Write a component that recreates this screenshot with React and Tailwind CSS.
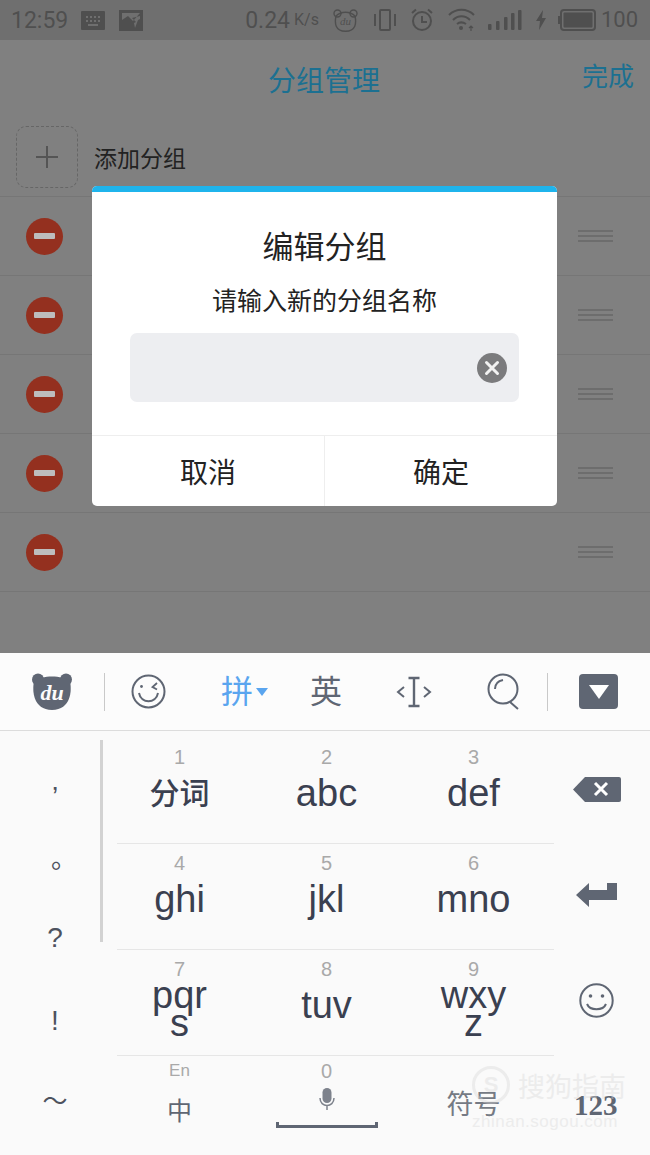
// App.jsx - group editing dialog over a list, with the pinyin keyboard open
import React from 'react';

const CJK = "font-['Noto_Sans_CJK_SC','Liberation_Sans',sans-serif]";

const keyRows = [
  [
    { num: '1', label: '分词', cjk: true },
    { num: '2', label: 'abc' },
    { num: '3', label: 'def' },
  ],
  [
    { num: '4', label: 'ghi' },
    { num: '5', label: 'jkl' },
    { num: '6', label: 'mno' },
  ],
  [
    { num: '7', label: 'pqr', second: 's' },
    { num: '8', label: 'tuv' },
    { num: '9', label: 'wxy', second: 'z' },
  ],
];

const StatusIcons = () => (
  <div className="flex items-center text-[#4f4f4f]">
    <span className="text-[23px] leading-none font-['Roboto',sans-serif]">0.24</span>
    <span className="ml-[4px] text-[16px] leading-none font-['Roboto',sans-serif]">K/s</span>
    <svg className="ml-[14px]" width="25" height="23" viewBox="0 0 25 23" fill="none" stroke="#4f4f4f" strokeWidth="1.4">
      <circle cx="4.5" cy="4.5" r="3.5" />
      <circle cx="20.5" cy="4.5" r="3.5" />
      <path d="M3 7C1.5 14 2 22 12.5 22.3C23 22 23.5 14 22 7C17 2 8 2 3 7Z" />
      <text x="12.5" y="15.5" fontSize="11" fontStyle="italic" fontFamily="Liberation Serif" textAnchor="middle" fill="#4f4f4f" stroke="none">du</text>
    </svg>
    <svg className="ml-[16px]" width="22" height="22" viewBox="0 0 22 22" fill="none" stroke="#4f4f4f">
      <rect x="6" y="1" width="10" height="20" rx="1" strokeWidth="2" />
      <path d="M1 5V17M21 5V17" strokeWidth="2" />
    </svg>
    <svg className="ml-[14px]" width="24" height="24" viewBox="0 0 24 24" fill="none" stroke="#4f4f4f" strokeWidth="2">
      <circle cx="12" cy="13" r="9" />
      <path d="M12 8V14H17M2 5L6 1.5M22 5L18 1.5" />
    </svg>
    <svg className="ml-[14px]" width="28" height="24" viewBox="0 0 28 24" fill="none" stroke="#4f4f4f" strokeWidth="2">
      <path d="M1 7C8 0 19 0 26 7M5 12C10 7 17 7 22 12M9 16C11.5 14 15 14 18 16" />
      <circle cx="13" cy="20" r="2" fill="#4f4f4f" stroke="none" />
      <path d="M23 23V18M21 20L23 18L25 20" strokeWidth="1.2" />
    </svg>
    <svg className="ml-[12px]" width="34" height="20" viewBox="0 0 34 20" fill="#4f4f4f">
      <rect x="0" y="14" width="3.5" height="6" rx="1" />
      <rect x="8" y="11" width="3.5" height="9" rx="1" />
      <rect x="16" y="7" width="3.5" height="13" rx="1" />
      <rect x="23" y="3" width="3.5" height="17" rx="1" />
      <rect x="30" y="0" width="3.5" height="20" rx="1" />
    </svg>
    <svg className="ml-[14px]" width="10" height="20" viewBox="0 0 10 20" fill="#4f4f4f">
      <path d="M7 0L0 11H4L3 20L10 8H6Z" />
    </svg>
    <svg className="ml-[12px]" width="38" height="22" viewBox="0 0 38 22" fill="none">
      <rect x="3" y="1" width="34" height="20" rx="3" stroke="#4f4f4f" strokeWidth="2" />
      <rect x="5.5" y="3.5" width="29" height="15" rx="1" fill="#4f4f4f" />
      <rect x="0" y="7" width="2" height="8" fill="#4f4f4f" />
    </svg>
    <span className="ml-[5px] text-[22px] leading-none font-['Roboto',sans-serif]">100</span>
  </div>
);

const GroupRow = () => (
  <div className="h-[79px] border-b border-[#767676] flex items-center justify-between pl-[26px] pr-[37px]">
    <div className="w-[37px] h-[37px] rounded-full bg-[#94301f] flex items-center justify-center">
      <div className="w-[21px] h-[6px] rounded-[1px] bg-[#bdbdbd]" />
    </div>
    <div className="w-[35px] flex flex-col gap-[3px]">
      <div className="h-[2px] bg-[#6d6d6d]" />
      <div className="h-[2px] bg-[#6d6d6d]" />
      <div className="h-[2px] bg-[#6d6d6d]" />
    </div>
  </div>
);

const Dialog = () => (
  <div className={`absolute left-[92px] top-[186px] w-[465px] h-[320px] bg-white rounded-[5px] overflow-hidden flex flex-col ${CJK}`}>
    <div className="h-[6px] bg-[#1fb4ec] shrink-0" />
    <div className="h-[244px] shrink-0 flex flex-col items-center border-b border-[#eeeeee]">
      <div className="mt-[30px] h-[44px] flex items-center text-[31px] leading-none text-[#222]">编辑分组</div>
      <div className="mt-[15px] h-[36px] flex items-center text-[25px] leading-none text-[#222]">请输入新的分组名称</div>
      <div className="mt-[16px] w-[389px] h-[69px] rounded-[7px] bg-[#edeef1] flex items-center justify-end pr-[12px]">
        <svg width="30" height="30" viewBox="0 0 30 30">
          <circle cx="15" cy="15" r="15" fill="#7b7b7d" />
          <path d="M9.5 9.5L20.5 20.5M20.5 9.5L9.5 20.5" stroke="#f2f2f2" strokeWidth="3" strokeLinecap="round" />
        </svg>
      </div>
    </div>
    <div className="flex-1 flex text-[28px] text-[#222]">
      <div className="w-[233px] border-r border-[#eeeeee] flex items-center justify-center">取消</div>
      <div className="flex-1 flex items-center justify-center">确定</div>
    </div>
  </div>
);

const Toolbar = () => (
  <div className="h-[78px] bg-[#fcfcfc] border-b border-[#dcdcdc] flex items-center text-[#5f6673]">
    {/* du bear */}
    <svg className="ml-[32px]" width="40" height="37" viewBox="0 0 40 37" fill="#5f6673">
      <circle cx="6" cy="6.5" r="6" />
      <circle cx="34" cy="6.5" r="6" />
      <path d="M2 8C0 18 1 36.5 20 37C39 36.5 40 18 38 8C30 2 10 2 2 8Z" />
      <text x="20" y="27" fontSize="22" fontWeight="700" fontStyle="italic" fontFamily="Liberation Serif" textAnchor="middle" fill="#fcfcfc">du</text>
    </svg>
    <div className="ml-[32px] w-px h-[38px] bg-[#c9c9c9]" />
    {/* wink */}
    <svg className="ml-[26px]" width="35" height="35" viewBox="0 0 35 35" fill="none" stroke="#5f6673" strokeWidth="2">
      <circle cx="17.5" cy="17.5" r="16" />
      <path d="M8 19C10 30 25 30 27 19" />
      <circle cx="10.5" cy="12.5" r="1.4" fill="#5f6673" stroke="none" />
      <path d="M26 9L21.5 13L26 15.5" strokeWidth="1.8" />
    </svg>
    <span className={`ml-[55px] w-[32px] -mt-[6px] text-[32px] leading-none text-[#5aa5ef] ${CJK}`}>拼</span>
    <svg className="ml-[3px]" width="12" height="8" viewBox="0 0 12 8" fill="#5aa5ef">
      <path d="M0 0H12L6 8Z" />
    </svg>
    <span className={`ml-[42px] w-[32px] -mt-[6px] text-[32px] leading-none ${CJK}`}>英</span>
    <svg className="ml-[54px]" width="36" height="36" viewBox="0 0 36 36" fill="none" stroke="#5f6673" strokeWidth="2">
      <path d="M8 13L2 18L8 23M28 13L34 18L28 23" />
      <path d="M12.5 4H23.5M12.5 32H23.5" strokeWidth="2.4" />
      <path d="M18 4V32" strokeWidth="2.4" />
    </svg>
    <svg className="ml-[55px]" width="33" height="37" viewBox="0 0 33 37" fill="none" stroke="#5f6673" strokeWidth="2">
      <circle cx="16" cy="16" r="14.5" />
      <path d="M8 16C8 11 11 8 16 7M23 29L31 36" />
    </svg>
    <div className="ml-[27px] w-px h-[38px] bg-[#c9c9c9]" />
    <div className="ml-[31px] w-[39px] h-[35px] rounded-[4px] bg-[#5f6673] flex items-center justify-center">
      <svg width="22" height="14" viewBox="0 0 22 14" fill="#fff">
        <path d="M1 0H21L11 14Z" />
      </svg>
    </div>
  </div>
);

const LeftSymbols = () => (
  <div className="w-[100px] pl-[10px] shrink-0 text-[#4d525e] text-center font-['Liberation_Sans',sans-serif]">
    <div className="mt-[41px] h-[50px] text-[28px] leading-[50px]">’</div>
    <div className={`mt-[10px] h-[50px] pl-[18px] text-[26px] leading-[50px] ${CJK}`}>。</div>
    <div className="mt-[31px] h-[50px] text-[28px] leading-[50px] font-light">?</div>
    <div className="mt-[33px] h-[50px] text-[28px] leading-[50px]">!</div>
    <div className={`mt-[28px] h-[50px] text-[25px] leading-[50px] ${CJK}`}>～</div>
  </div>
);

const Key = ({ num, label, second, cjk }) => (
  <div className="w-[147px] h-[105px] flex flex-col items-center text-[#3a4050] font-['Liberation_Sans',sans-serif]">
    <span className="mt-[8px] h-[22px] text-[20px] leading-[22px] text-[#a9a9a9]">{num}</span>
    {second ? (
      <div className="mt-[1px] flex flex-col items-center text-[38px] leading-[28px]">
        <span className="h-[28px]">{label}</span>
        <span className="h-[28px]">{second}</span>
      </div>
    ) : cjk ? (
      <span className={`h-[46px] text-[30px] leading-[46px] font-medium ${CJK}`}>{label}</span>
    ) : (
      <span className="mt-[2px] h-[46px] text-[38px] leading-[46px]">{label}</span>
    )}
  </div>
);

const RightKeys = () => (
  <div className="flex-1 flex flex-col items-center pr-[11px]">
    <svg className="mt-[46px]" width="48" height="25" viewBox="0 0 48 25" fill="#5f6673">
      <path d="M0 12.5L12 0H46A2 2 0 0 1 48 2V23A2 2 0 0 1 46 25H12Z" />
      <path d="M22 6L34 18M34 6L22 18" stroke="#fff" strokeWidth="3" />
    </svg>
    <svg className="mt-[81px]" width="41" height="24" viewBox="0 0 41 24" fill="#5f6673">
      <path d="M0 12L13 0V7H31V0H41V17H13V24Z" />
    </svg>
    <svg className="mt-[76px]" width="35" height="35" viewBox="0 0 35 35" fill="none" stroke="#5f6673" strokeWidth="2">
      <circle cx="17.5" cy="17.5" r="16.2" />
      <path d="M8 21C11 28 24 28 27 21" />
      <circle cx="11.5" cy="13" r="1.8" fill="#5f6673" stroke="none" />
      <circle cx="23.5" cy="13" r="1.8" fill="#5f6673" stroke="none" />
    </svg>
  </div>
);

const BottomRow = () => (
  <div className="flex h-[100px] -ml-[11px] text-[#5f6673]">
    <div className="w-[147px] flex flex-col items-center">
      <span className="mt-[5px] h-[20px] text-[17px] leading-[20px] text-[#a9a9a9] font-['Liberation_Sans',sans-serif]">En</span>
      <span className={`mt-[9px] h-[38px] text-[25px] leading-[38px] ${CJK}`}>中</span>
    </div>
    <div className="w-[147px] flex flex-col items-center">
      <span className="mt-[5px] h-[20px] text-[20px] leading-[20px] text-[#a9a9a9] font-['Liberation_Sans',sans-serif]">0</span>
      <svg className="mt-[7px]" width="16" height="24" viewBox="0 0 16 24" fill="none">
        <rect x="3.5" y="0" width="9" height="15" rx="4.5" fill="#7d828c" />
        <path d="M1 10C1 20 15 20 15 10M8 17V22" stroke="#7d828c" strokeWidth="1.5" />
      </svg>
      <svg className="mt-[10px]" width="102" height="6" viewBox="0 0 102 6" fill="#5f6673">
        <path d="M0 0H3V3H99V0H102V6H0Z" />
      </svg>
    </div>
    <div className="w-[147px] flex justify-center">
      <span className={`mt-[28px] h-[38px] text-[27px] leading-[38px] text-[#757a84] ${CJK}`}>符号</span>
    </div>
  </div>
);

const Watermark = () => (
  <div className="absolute left-[472px] top-[1066px] w-[160px] h-[66px] opacity-40 text-[#d8d8d8]">
    <div className="flex items-center">
      <div className="w-[38px] h-[38px] rounded-full border-[3px] border-[#d8d8d8] flex items-center justify-center text-[22px] leading-none font-bold font-['Liberation_Sans',sans-serif]">S</div>
      <span className={`ml-[8px] text-[27px] leading-none ${CJK}`}>搜狗指南</span>
    </div>
    <div className="mt-[9px] text-[17px] leading-none tracking-[0.5px] font-['Liberation_Sans',sans-serif]">zhinan.sogou.com</div>
  </div>
);

const App = () => {
  return (
    <div className={`relative w-[650px] h-[1155px] overflow-hidden bg-[#808080] ${CJK}`}>
      {/* status bar */}
      <div className="h-[40px] bg-[#6f6f6f] flex items-center justify-between pl-[11px] pr-[12px]">
        <div className="flex items-center text-[#4f4f4f]">
          <span className="text-[23px] leading-none font-['Roboto',sans-serif]">12:59</span>
          <svg className="ml-[13px]" width="24" height="19" viewBox="0 0 24 19" fill="#4f4f4f">
            <path fillRule="evenodd" d="M1 0H23A1 1 0 0 1 24 1V18A1 1 0 0 1 23 19H1A1 1 0 0 1 0 18V1A1 1 0 0 1 1 0ZM5 5V7H7V5ZM9 5V7H11V5ZM13 5V7H15V5ZM17 5V7H19V5ZM5 9V11H7V9ZM9 9V11H11V9ZM13 9V11H15V9ZM17 9V11H19V9ZM7 13V15H17V13Z" />
          </svg>
          <svg className="ml-[14px]" width="24" height="21" viewBox="0 0 24 21" fill="#4f4f4f">
            <path fillRule="evenodd" d="M0 0H24V21H0ZM3 3V10L9 6L14 11L21 3ZM13 8L17 12L15 13L16 18L19 10L21 9V6Z" />
          </svg>
        </div>
        <StatusIcons />
      </div>

      {/* header */}
      <div className="h-[78px] flex items-center pl-[268px] pr-[16px] justify-between">
        <span className="text-[28px] leading-none text-[#1c7091] mt-[-1px]">分组管理</span>
        <span className="text-[26px] leading-none text-[#1c7091] -mt-[8px]">完成</span>
      </div>

      {/* add group */}
      <div className="h-[79px] border-b border-[#767676] flex items-center pl-[16px]">
        <div className="w-[62px] h-[62px] -mt-[1px] rounded-[10px] border-[1.5px] border-dashed border-[#666666] flex items-center justify-center">
          <svg width="22" height="22" viewBox="0 0 22 22" stroke="#555555" strokeWidth="2">
            <path d="M11 0V22M0 11H22" />
          </svg>
        </div>
        <span className="ml-[16px] text-[23px] leading-none text-[#222]">添加分组</span>
      </div>

      {/* group list */}
      <GroupRow />
      <GroupRow />
      <GroupRow />
      <GroupRow />
      <GroupRow />
      <div className="h-[61px]" />

      <Toolbar />

      {/* keyboard */}
      <div className="relative h-[425px] bg-[#fafafa] flex">
        <LeftSymbols />
        <div className="w-[3px] h-[202px] mt-[9px] bg-[#d2d2d2] shrink-0" />
        <div className="ml-[14px] w-[437px] shrink-0 pt-[7px]">
          {keyRows.map((row, i) => (
            <div key={i} className="border-b-[1.5px] border-[#e6e6e6]">
              <div className="flex -ml-[11px]">
                {row.map((key) => (
                  <Key key={key.num} {...key} />
                ))}
              </div>
            </div>
          ))}
          <BottomRow />
        </div>
        <RightKeys />
        <span className="absolute left-[574px] top-[360px] text-[29px] leading-none font-bold text-[#5f6673] font-['Liberation_Serif',serif]">123</span>
      </div>

      <Dialog />
      <Watermark />
    </div>
  );
};

export default App;
